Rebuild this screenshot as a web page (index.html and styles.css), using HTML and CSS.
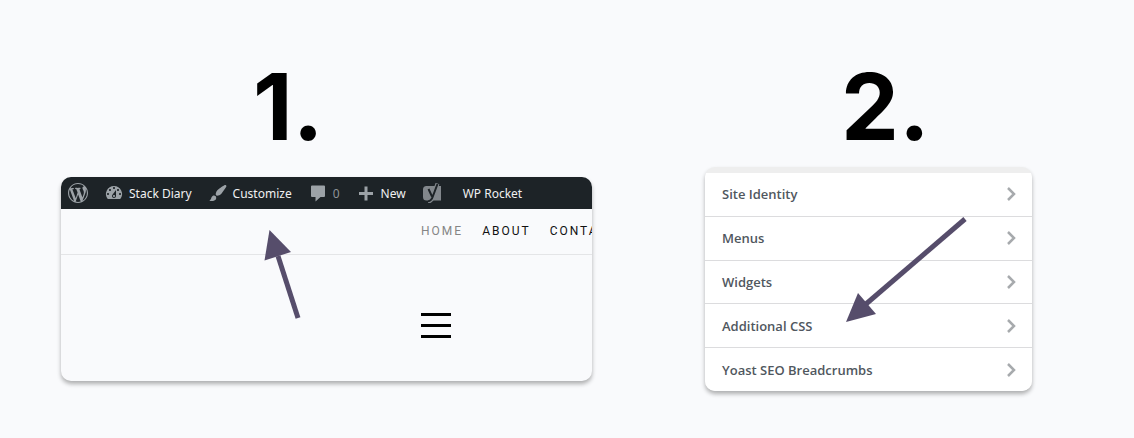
FILE: index.html
```
<!DOCTYPE html>
<html lang="en">
<head>
    <meta charset="UTF-8">
    <title>Additional CSS in WordPress</title>
    <meta name="viewport" content="width=device-width, initial-scale=1.0">
    <link rel="stylesheet" href="styles.css">
</head>
<body>
    <main class="steps">
        <section class="step">
            <h2 class="step-number first">1.</h2>
            <div class="card site">
                <div class="admin-bar">
                    <a href="#" class="bar-item" aria-label="About WordPress">
                        <svg class="icon" viewBox="0 0 20 20"><path d="M20 10c0-5.51-4.49-10-10-10C4.48 0 0 4.49 0 10c0 5.52 4.48 10 10 10 5.51 0 10-4.48 10-10zM7.78 15.37L4.37 6.22c.55-.02 1.17-.08 1.17-.08.5-.06.44-1.13-.06-1.11 0 0-1.45.11-2.37.11-.18 0-.37 0-.58-.01C4.12 2.69 6.87 1.11 10 1.11c2.33 0 4.45.87 6.05 2.34-.68-.11-1.65.39-1.65 1.58 0 .74.45 1.36.9 2.1.35.61.55 1.36.55 2.46 0 1.49-1.4 5-1.4 5l-3.03-8.37c.54-.02.82-.17.82-.17.5-.05.44-1.25-.06-1.22 0 0-1.44.12-2.38.12-.87 0-2.33-.12-2.33-.12-.5-.03-.56 1.2-.06 1.22l.92.08 1.26 3.41zM17.41 10c.24-.64.74-1.87.43-4.25.7 1.29 1.05 2.71 1.05 4.25 0 3.29-1.73 6.24-4.4 7.78.97-2.59 1.94-5.2 2.92-7.78zM6.1 18.09C3.12 16.65 1.11 13.53 1.11 10c0-1.3.23-2.48.72-3.59C3.25 10.3 4.67 14.2 6.1 18.09zm4.03-6.63l2.58 6.98c-.86.29-1.76.45-2.71.45-.79 0-1.57-.11-2.29-.33.81-2.38 1.62-4.74 2.42-7.1z"/></svg>
                    </a>
                    <a href="#" class="bar-item">
                        <svg class="icon" viewBox="0 0 20 20"><path d="M3.76 16h12.48A7.998 7.998 0 0 0 10 3a7.998 7.998 0 0 0-6.24 13zM10 4c.55 0 1 .45 1 1s-.45 1-1 1-1-.45-1-1 .45-1 1-1zM6 6c.55 0 1 .45 1 1s-.45 1-1 1-1-.45-1-1 .45-1 1-1zm8 0c.55 0 1 .45 1 1s-.45 1-1 1-1-.45-1-1 .45-1 1-1zm-5.37 5.55L12 7v6c0 1.1-.9 2-2 2s-2-.9-2-2c0-.57.24-1.08.63-1.45zM4 10c.55 0 1 .45 1 1s-.45 1-1 1-1-.45-1-1 .45-1 1-1zm12 0c.55 0 1 .45 1 1s-.45 1-1 1-1-.45-1-1 .45-1 1-1zm-5 3c0-.55-.45-1-1-1s-1 .45-1 1 .45 1 1 1 1-.45 1-1z"/></svg>
                        Stack Diary
                    </a>
                    <a href="#" class="bar-item">
                        <svg class="icon" viewBox="0 0 20 20"><path d="M18.33 3.57s.27-.8-.31-1.36c-.53-.52-1.22-.24-1.22-.24-.61.3-5.76 3.47-7.67 5.57-.86.96-2.06 3.79-1.09 4.82.92.98 3.96-.17 4.79-1 2.06-2.06 5.21-7.17 5.5-7.79zM1.4 17.65c2.37-1.56 1.46-3.41 3.23-4.64.93-.65 2.22-.62 3.08.29.63.67.8 2.57-.16 3.46-1.57 1.45-4 1.55-6.15.89z"/></svg>
                        Customize
                    </a>
                    <a href="#" class="bar-item muted">
                        <svg class="icon" viewBox="0 0 20 20"><path d="M4 2.500h12a1 1 0 0 1 1 1v9.500a1 1 0 0 1-1 1h-3.500L7.500 18.500V14H4a1 1 0 0 1-1-1V3.500a1 1 0 0 1 1-1z"/></svg>
                        0
                    </a>
                    <a href="#" class="bar-item">
                        <svg class="icon" viewBox="0 0 20 20"><path d="M8.500 3.500h3v5.500h5.500v3h-5.500v5.500h-3v-5.500H3v-3h5.500z"/></svg>
                        New
                    </a>
                    <a href="#" class="bar-item" aria-label="Yoast SEO">
                        <svg class="icon yoast" viewBox="0 0 20 20">
                            <path d="M4.500 3H19V17.500H4.500A3.500 3.500 0 0 1 1 14V6.500A3.500 3.500 0 0 1 4.500 3z"/>
                            <path class="mark-edge" d="M15.500 .5L11 13Q9.500 18.500 6 18.500"/>
                            <path class="mark" d="M6.500 6L10 13.500M15.500 1L11 13Q9.500 18 6 18.200"/>
                        </svg>
                    </a>
                    <a href="#" class="bar-item plain">WP Rocket</a>
                </div>
                <nav class="site-nav">
                    <a href="#" class="current">HOME</a>
                    <a href="#">ABOUT</a>
                    <a href="#">CONTACT</a>
                </nav>
                <div class="site-body">
                    <button class="menu-button" aria-label="Menu">
                        <span></span><span></span><span></span>
                    </button>
                </div>
            </div>
            <svg class="arrow arrow-up" viewBox="0 0 40 92">
                <path class="shaft" d="M14 26L34 88"/>
                <path d="M5.500 0L27 22 .5 30.500z"/>
            </svg>
        </section>

        <section class="step">
            <h2 class="step-number second">2.</h2>
            <div class="card customizer">
                <a href="#" class="row">Site Identity <svg class="chevron" viewBox="0 0 10 16"><path d="M2 2l6 6-6 6"/></svg></a>
                <a href="#" class="row">Menus <svg class="chevron" viewBox="0 0 10 16"><path d="M2 2l6 6-6 6"/></svg></a>
                <a href="#" class="row">Widgets <svg class="chevron" viewBox="0 0 10 16"><path d="M2 2l6 6-6 6"/></svg></a>
                <a href="#" class="row">Additional CSS <svg class="chevron" viewBox="0 0 10 16"><path d="M2 2l6 6-6 6"/></svg></a>
                <a href="#" class="row">Yoast SEO Breadcrumbs <svg class="chevron" viewBox="0 0 10 16"><path d="M2 2l6 6-6 6"/></svg></a>
            </div>
            <svg class="arrow arrow-down" viewBox="0 0 122 106">
                <path class="shaft" d="M20 87L119 2"/>
                <path d="M0 105L12 76 30 97z"/>
            </svg>
        </section>
    </main>
</body>
</html>
```
FILE: styles.css
```
body {
    margin: 0;
    background-color: #f9fafc;
    font-family: "Open Sans", "Noto Sans", sans-serif;
}
a {
    color: inherit;
    text-decoration: none;
}

.steps {
    display: grid;
    grid-template-columns: minmax(0, 531fr) minmax(0, 327fr);
    align-items: start;
    column-gap: 113px;
    padding: 62px 102px 46px 61px;
}
.step {
    position: relative;
}
.step-number {
    margin: 0;
    font-family: Inter, sans-serif;
    font-size: 92px;
    font-weight: 700;
    line-height: 90px;
    color: #000;
}
.first {
    padding: 0 0 25px 192px;
}
.second {
    padding: 0 0 15px 136px;
}
.card {
    border-radius: 10px;
    overflow: hidden;
    box-shadow: 0 3px 4px rgba(0, 0, 0, 0.3);
}

/* front end with the admin bar */
.site {
    background-color: #f9fafc;
}
.admin-bar {
    display: flex;
    align-items: center;
    gap: 16px;
    height: 32px;
    padding: 0 7px;
    background-color: #1d2327;
    color: #f0f0f1;
    font-family: "Noto Sans", sans-serif;
    font-size: 12px;
    white-space: nowrap;
}
.bar-item {
    display: flex;
    align-items: center;
    gap: 5px;
}
.muted {
    color: #8f9398;
}
.plain {
    padding-left: 5px;
}
.icon {
    width: 20px;
    height: 20px;
    fill: #9ca2a7;
}
.yoast {
    fill: #82878c;
}
.mark,
.mark-edge {
    fill: none;
    stroke: #1d2327;
    stroke-width: 2;
}
.mark-edge {
    stroke: #82878c;
    stroke-width: 4;
}
.site-nav {
    display: flex;
    gap: 19px;
    padding: 12px 0 13px 360px;
    border-bottom: 1px solid #e4e5e7;
    font-family: Roboto, sans-serif;
    font-size: 12px;
    line-height: 20px;
    letter-spacing: 2px;
    color: #111;
}
.current {
    color: #858585;
}
.site-body {
    padding: 58px 0 43px 360px;
}
.menu-button {
    display: flex;
    flex-direction: column;
    gap: 8px;
    width: 30px;
    padding: 0;
    border: 0;
    background: none;
}
.menu-button span {
    width: 100%;
    height: 3px;
    background-color: #000;
}

/* customizer panel list */
.customizer {
    display: flex;
    flex-direction: column;
    min-height: 218px;
    padding-top: 6px;
    background-color: #eee;
}
.row {
    display: flex;
    flex: 1;
    align-items: center;
    justify-content: space-between;
    padding: 0 16px 0 17px;
    border-bottom: 1px solid #dcdcde;
    background-color: #fff;
    color: #50575e;
    font-size: 13px;
    font-weight: 600;
}
.row:last-child {
    border-bottom: 0;
}
.chevron {
    width: 10px;
    height: 16px;
    fill: none;
    stroke: #a7aaad;
    stroke-width: 2.5;
}

.arrow {
    position: absolute;
    fill: #564d6b;
}
.shaft {
    fill: none;
    stroke: #564d6b;
    stroke-width: 5;
}
.arrow-up {
    top: 168px;
    left: 203px;
    width: 40px;
    height: 92px;
}
.arrow-down {
    top: 155px;
    left: 141px;
    width: 122px;
    height: 106px;
}
```
